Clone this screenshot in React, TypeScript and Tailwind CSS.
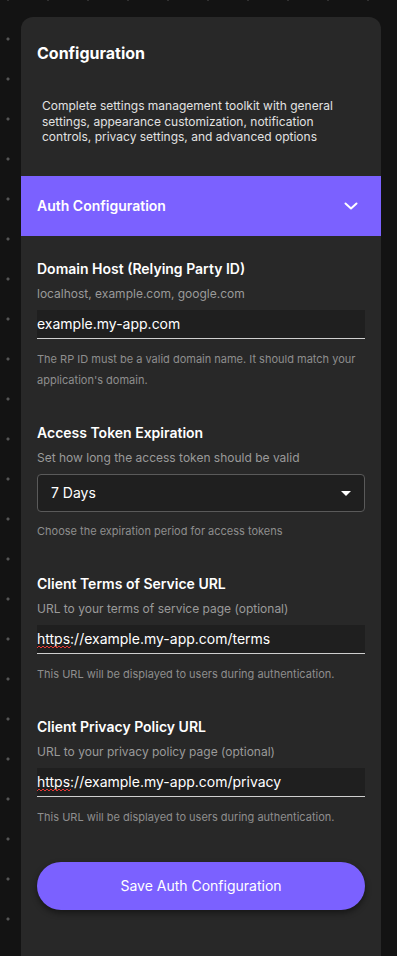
import { useState } from "react";

const font = { fontFamily: "Inter, 'Noto Sans', sans-serif" };

function Squiggle() {
  return (
    <svg
      className="pointer-events-none absolute left-0 bottom-[5px]"
      width="34"
      height="4"
      viewBox="0 0 34 4"
    >
      <path
        d="M0 3 L2 1 L4 3 L6 1 L8 3 L10 1 L12 3 L14 1 L16 3 L18 1 L20 3 L22 1 L24 3 L26 1 L28 3 L30 1 L32 3 L34 1"
        fill="none"
        stroke="#e53935"
        strokeWidth="1"
      />
    </svg>
  );
}

function TextField({
  label,
  hint,
  value,
  helper,
  squiggle,
}: {
  label: string;
  hint: string;
  value: string;
  helper: string[];
  squiggle?: boolean;
}) {
  const [v, setV] = useState(value);
  return (
    <div className="flex flex-col">
      <label className="text-[14px] leading-5 font-semibold text-white">{label}</label>
      <p className="mt-[5px] text-[12px] leading-5 text-[#9a9a9a]">{hint}</p>
      <div className="relative mt-[6px]">
        <input
          value={v}
          onChange={(e) => setV(e.target.value)}
          spellCheck={false}
          className="h-[29px] w-full border-b border-[#cfcfcf] bg-[#1f1f1f] text-[14px] text-white outline-none"
          style={font}
        />
        {squiggle && <Squiggle />}
      </div>
      <p className="mt-[10px] text-[11px] leading-[21px] text-[#8e8e8e]">
        {helper.map((h, i) => (
          <span key={i} className="block">
            {h}
          </span>
        ))}
      </p>
    </div>
  );
}

export default function App() {
  return (
    <div
      className="min-h-screen overflow-hidden bg-[#131313] bg-[radial-gradient(circle,#555555_1.3px,transparent_1.8px)] bg-size-[40px_40px] bg-position-[-12px_19px] pt-[17px]"
      style={font}
    >
      <div className="ml-[21px] w-[360px] rounded-t-xl bg-[#282828] pb-[60px]">
        {/* <!--Header--> */}
        <div className="px-4 pt-6">
          <h1 className="text-[16px] leading-6 font-bold text-white">Configuration</h1>
          <p className="mt-[33px] pl-[5px] pr-2 text-[12px] leading-[15.5px] text-[#e2e2e2]">
            Complete settings management toolkit with general settings, appearance
            customization, notification controls, privacy settings, and advanced options
          </p>
        </div>

        {/* <!--Accordion--> */}
        <button className="mt-[31px] flex h-[60px] w-full items-center justify-between bg-[#7b61ff] px-4 text-left">
          <span className="text-[14px] font-semibold text-white">Auth Configuration</span>
          <svg width="14" height="8" viewBox="0 0 14 8" className="mr-[7px]">
            <path d="M1.5 1.5 L7 6.5 L12.5 1.5" fill="none" stroke="#fff" strokeWidth="2" strokeLinecap="round" strokeLinejoin="round" />
          </svg>
        </button>

        <div className="flex flex-col gap-[32px] px-4 pt-[23px]">
          <TextField
            label="Domain Host (Relying Party ID)"
            hint="localhost, example.com, google.com"
            value="example.my-app.com"
            helper={["The RP ID must be a valid domain name. It should match your", "application's domain."]}
          />

          <div className="flex flex-col">
            <label className="text-[14px] leading-5 font-semibold text-white">Access Token Expiration</label>
            <p className="mt-[5px] text-[12px] leading-5 text-[#9a9a9a]">
              Set how long the access token should be valid
            </p>
            <div className="relative mt-[6px]">
              <select
                defaultValue="7"
                className="h-[38px] w-full appearance-none rounded border border-[#5a5a5a] bg-[#1f1f1f] pl-[13px] text-[14px] text-white outline-none"
                style={font}
              >
                <option value="1">1 Day</option>
                <option value="7">7 Days</option>
                <option value="30">30 Days</option>
              </select>
              <svg
                className="pointer-events-none absolute right-[14px] top-[17px]"
                width="10"
                height="5"
                viewBox="0 0 10 5"
              >
                <path d="M0 0 L10 0 L5 5 Z" fill="#fff" />
              </svg>
            </div>
            <p className="mt-[9px] text-[11px] leading-[21px] text-[#8e8e8e]">
              Choose the expiration period for access tokens
            </p>
          </div>

          <TextField
            label="Client Terms of Service URL"
            hint="URL to your terms of service page (optional)"
            value="https://example.my-app.com/terms"
            helper={["This URL will be displayed to users during authentication."]}
            squiggle
          />

          <TextField
            label="Client Privacy Policy URL"
            hint="URL to your privacy policy page (optional)"
            value="https://example.my-app.com/privacy"
            helper={["This URL will be displayed to users during authentication."]}
            squiggle
          />

          <button className="mt-[2px] h-[48px] w-full rounded-full bg-[#7b61ff] text-[14px] font-normal text-white shadow-[0_3px_6px_rgba(0,0,0,0.45)]">
            Save Auth Configuration
          </button>
        </div>
      </div>
    </div>
  );
}
